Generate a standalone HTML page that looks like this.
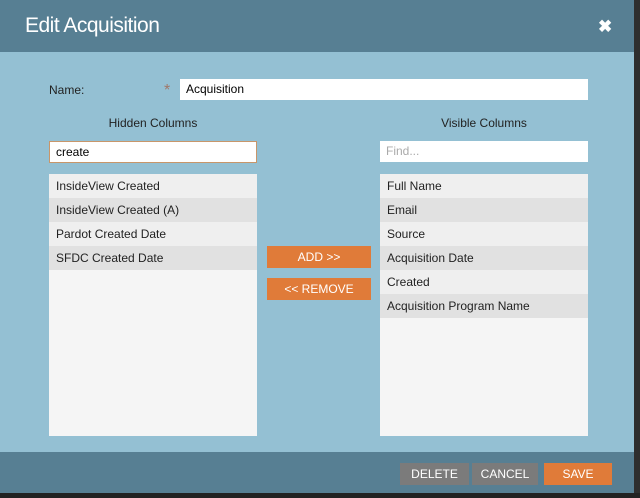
<!DOCTYPE html>
<html><head><style>
body{margin:0;width:640px;height:498px;background:#2e2e2e;position:relative;overflow:hidden;font-family:"Liberation Sans",sans-serif;}
.d{position:absolute;left:0;top:0;width:634px;height:493px;background:#94c0d3;}
.h{position:absolute;left:0;top:0;width:634px;height:52px;background:#577f93;}
.h span{position:absolute;left:25px;top:14px;color:#fff;font-size:21px;letter-spacing:-0.5px;}
.x{position:absolute;left:598px;top:17px;color:#fff;font-size:17px;font-weight:bold;}
.f{position:absolute;left:0;top:452px;width:634px;height:41px;background:#577f93;}
.t{position:absolute;font-size:12px;color:#222;}
.in{position:absolute;background:#fff;font-size:12px;box-sizing:border-box;padding:3px 6px;}
.list{position:absolute;background:#f5f5f5;top:174px;width:208px;height:262px;}
.list div{height:24px;line-height:24px;padding-left:7px;font-size:12px;color:#222;}
.list div:nth-child(odd){background:#efefef}.list div:nth-child(even){background:#e1e1e1}
.b{position:absolute;color:#fff;font-size:12px;text-align:center;line-height:22px;height:22px;}
.bot{position:absolute;left:0;top:493px;width:640px;height:5px;background:#222;}
</style></head><body>
<div class="d">
<div class="h"><span>Edit Acquisition</span><div class="x">✖</div></div>
<div class="t" style="left:49px;top:83px">Name:</div>
<div class="t" style="left:164px;top:82px;color:#a0786a;font-size:16px">*</div>
<div class="in" style="left:180px;top:79px;width:408px;height:21px;padding-top:3px">Acquisition</div>
<div class="t" style="left:49px;top:116px;width:208px;text-align:center">Hidden Columns</div>
<div class="t" style="left:380px;top:116px;width:208px;text-align:center">Visible Columns</div>
<div class="in" style="left:49px;top:141px;width:208px;height:22px;border:1px solid #c8966a">create</div>
<div class="in" style="left:380px;top:141px;width:208px;height:21px;color:#aaa">Find...</div>
<div class="list" style="left:49px"><div>InsideView Created</div><div>InsideView Created (A)</div><div>Pardot Created Date</div><div>SFDC Created Date</div></div>
<div class="list" style="left:380px"><div>Full Name</div><div>Email</div><div>Source</div><div>Acquisition Date</div><div>Created</div><div>Acquisition Program Name</div></div>
<div class="b" style="left:267px;top:246px;width:104px;background:#e07b39">ADD &gt;&gt;</div>
<div class="b" style="left:267px;top:278px;width:104px;background:#e07b39">&lt;&lt; REMOVE</div>
<div class="f"></div>
<div class="b" style="left:400px;top:463px;width:69px;background:#7b7b7b">DELETE</div>
<div class="b" style="left:472px;top:463px;width:66px;background:#7b7b7b">CANCEL</div>
<div class="b" style="left:544px;top:463px;width:68px;background:#e07b39">SAVE</div>
</div>
<div class="bot"></div>
</body></html>
